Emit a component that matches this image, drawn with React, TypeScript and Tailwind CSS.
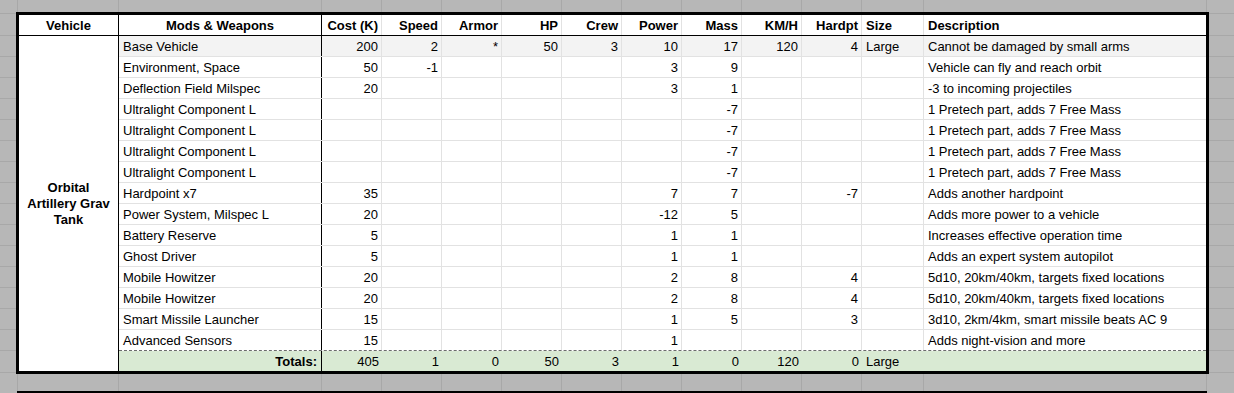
import React from "react";

const rows: string[][] = [
  ["Base Vehicle", "200", "2", "*", "50", "3", "10", "17", "120", "4", "Large", "Cannot be damaged by small arms"],
  ["Environment, Space", "50", "-1", "", "", "", "3", "9", "", "", "", "Vehicle can fly and reach orbit"],
  ["Deflection Field Milspec", "20", "", "", "", "", "3", "1", "", "", "", "-3 to incoming projectiles"],
  ["Ultralight Component L", "", "", "", "", "", "", "-7", "", "", "", "1 Pretech part, adds 7 Free Mass"],
  ["Ultralight Component L", "", "", "", "", "", "", "-7", "", "", "", "1 Pretech part, adds 7 Free Mass"],
  ["Ultralight Component L", "", "", "", "", "", "", "-7", "", "", "", "1 Pretech part, adds 7 Free Mass"],
  ["Ultralight Component L", "", "", "", "", "", "", "-7", "", "", "", "1 Pretech part, adds 7 Free Mass"],
  ["Hardpoint x7", "35", "", "", "", "", "7", "7", "", "-7", "", "Adds another hardpoint"],
  ["Power System, Milspec L", "20", "", "", "", "", "-12", "5", "", "", "", "Adds more power to a vehicle"],
  ["Battery Reserve", "5", "", "", "", "", "1", "1", "", "", "", "Increases effective operation time"],
  ["Ghost Driver", "5", "", "", "", "", "1", "1", "", "", "", "Adds an expert system autopilot"],
  ["Mobile Howitzer", "20", "", "", "", "", "2", "8", "", "4", "", "5d10, 20km/40km, targets fixed locations"],
  ["Mobile Howitzer", "20", "", "", "", "", "2", "8", "", "4", "", "5d10, 20km/40km, targets fixed locations"],
  ["Smart Missile Launcher", "15", "", "", "", "", "1", "5", "", "3", "", "3d10, 2km/4km, smart missile beats AC 9"],
  ["Advanced Sensors", "15", "", "", "", "", "1", "", "", "", "", "Adds night-vision and more"],
];

const totals = ["Totals:", "405", "1", "0", "50", "3", "1", "0", "120", "0", "Large", ""];
const headers = ["Mods & Weapons", "Cost (K)", "Speed", "Armor", "HP", "Crew", "Power", "Mass", "KM/H", "Hardpt", "Size", "Description"];

function Row({
  cells,
  bold,
  bg,
  bottom,
  boldFirst,
  height,
  lines = true,
}: {
  cells: string[];
  bold?: boolean;
  bg: string;
  bottom: string;
  boldFirst?: boolean;
  height: string;
  lines?: boolean;
}) {
  const sep = lines ? "border-r border-[#e2e2e2]" : "";
  return (
    <div className={`flex ${height} ${bg} ${bottom}`}>
      <div
        className={`w-[203px] shrink-0 flex items-center pt-[2px] px-[4px] border-r border-black whitespace-nowrap overflow-hidden ${
          bold ? "justify-center font-bold" : boldFirst ? "justify-end font-bold" : "justify-start"
        }`}
      >
        {cells[0]}
      </div>
      {cells.slice(1, 10).map((c, i) => (
        <div
          key={i}
          className={`w-[60px] shrink-0 flex items-center justify-end pt-[2px] px-[3px] whitespace-nowrap overflow-hidden ${sep} ${
            bold ? "font-bold" : ""
          }`}
        >
          {c}
        </div>
      ))}
      <div
        className={`w-[62px] shrink-0 flex items-center justify-start pt-[2px] px-[4px] whitespace-nowrap overflow-hidden ${sep} ${
          bold ? "font-bold" : ""
        }`}
      >
        {cells[10]}
      </div>
      <div
        className={`w-[282px] shrink-0 flex items-center justify-start pt-[2px] px-[4px] whitespace-nowrap overflow-hidden ${
          bold ? "font-bold" : ""
        }`}
      >
        {cells[11]}
      </div>
    </div>
  );
}

function ColStrip({ height }: { height: string }) {
  return (
    <div className={`flex ${height}`}>
      <div className="w-[18px] shrink-0 border-r border-[#a8a8a8]" />
      <div className="w-[101px] shrink-0 border-r border-[#a8a8a8]" />
      <div className="w-[203px] shrink-0 border-r border-[#a8a8a8]" />
      {Array.from({ length: 9 }).map((_, i) => (
        <div key={i} className="w-[60px] shrink-0 border-r border-[#a8a8a8]" />
      ))}
      <div className="w-[62px] shrink-0 border-r border-[#a8a8a8]" />
      <div className="w-[283px] shrink-0 border-r border-[#a8a8a8]" />
      <div className="flex-1" />
    </div>
  );
}

function RowStrip({ width }: { width: string }) {
  return (
    <div className={`flex flex-col ${width} shrink-0`}>
      <div className="h-[2px] border-b border-[#a8a8a8]" />
      <div className="h-[22px] border-b border-[#a8a8a8]" />
      {Array.from({ length: 15 }).map((_, i) => (
        <div key={i} className="h-[21px] border-b border-[#a8a8a8]" />
      ))}
      <div className="h-[22px] border-b border-[#a8a8a8]" />
      <div className="flex-1" />
    </div>
  );
}

export default function App() {
  return (
    <div className="w-[1234px] h-[393px] overflow-hidden bg-[#b7b7b7] font-['Liberation_Sans',Arial,sans-serif] text-[13px] leading-[16px] text-black flex flex-col">
      <ColStrip height="h-[12px]" />
      <div className="flex h-[362px]">
        <RowStrip width="w-[16px]" />
        <div className="w-[1193px] h-[362px] shrink-0 border-[3px] border-black bg-white flex">
          <div className="w-[100px] shrink-0 flex flex-col border-r border-black">
            <div className="h-[21px] shrink-0 border-b border-black flex items-center justify-center pt-[2px] font-bold">
              Vehicle
            </div>
            <div className="flex-1 flex items-center justify-center text-center font-bold px-[3px]">
              <span>
                Orbital
                <br />
                Artillery Grav
                <br />
                Tank
              </span>
            </div>
          </div>
          <div className="w-[1087px] shrink-0 flex flex-col">
            <Row cells={headers} bold bg="bg-white" bottom="border-b border-black" height="h-[21px]" />
            {rows.map((r, i) => (
              <Row
                key={i}
                cells={r}
                bg={i === 0 ? "bg-[#f3f3f3]" : "bg-white"}
                bottom={i === rows.length - 1 ? "border-b border-dashed border-[#6b6b6b]" : "border-b border-[#e2e2e2]"}
                height="h-[21px]"
              />
            ))}
            <Row
              cells={totals}
              boldFirst
              bg="bg-[#d9ead3]"
              bottom=""
              height="h-[20px]"
              lines={false}
            />
          </div>
        </div>
        <RowStrip width="flex-1" />
      </div>
      <ColStrip height="h-[17px]" />
      <div className="flex h-[2px]">
        <div className="w-[17px] shrink-0" />
        <div className="w-[1190px] shrink-0 bg-black" />
        <div className="flex-1" />
      </div>
    </div>
  );
}
